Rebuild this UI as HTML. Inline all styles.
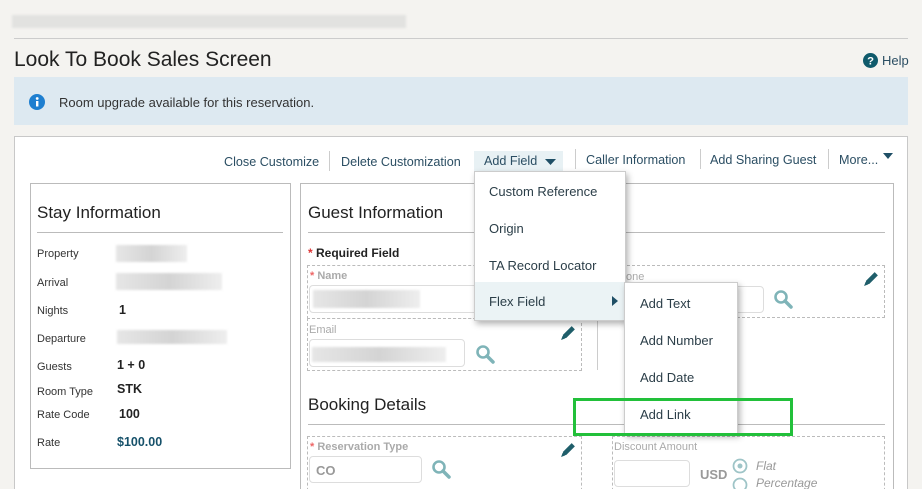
<!DOCTYPE html>
<html style="overflow:hidden;height:489px"><head><style>
*{margin:0;padding:0;box-sizing:border-box}
body{width:922px;height:489px;overflow:hidden;background:#f4f3f0;font-family:"Liberation Sans",sans-serif;color:#333;position:relative}
.a{position:absolute;white-space:nowrap}
.tb{font-size:12.6px;color:#2b4e63}
.sep{position:absolute;width:1px;height:20px;background:#ccc}
.lbl{font-size:11px;color:#333}
.val{font-size:12.5px;font-weight:bold;color:#222}
.dash{position:absolute;border:1px dashed #bbb}
.inp{position:absolute;border:1px solid #ddd;border-radius:4px;background:#fff}
.blur{position:absolute;background:linear-gradient(90deg,#e6e6e6,#d4d4d4,#eee);filter:blur(1px)}
.mi{position:absolute;font-size:13px;color:#2b3e48}
.ph{font-size:11px;color:#aaa}
</style></head><body>
<div class="blur" style="left:12px;top:15px;width:394px;height:13px;background:#e2e2e0"></div>
<div class="a" style="left:14px;top:38px;width:894px;height:1px;background:#ccc"></div>
<div class="a" style="left:14px;top:48px;font-size:21px;color:#222">Look To Book Sales Screen</div>
<svg class="a" style="left:863px;top:53px" width="15" height="15" viewBox="0 0 16 16"><circle cx="8" cy="8" r="8" fill="#0f5a6b"/><text x="8" y="12.5" font-size="12" font-weight="bold" fill="#fff" text-anchor="middle" font-family="Liberation Sans">?</text></svg>
<div class="a" style="left:882px;top:53px;font-size:13px;color:#2b4e63">Help</div>
<div class="a" style="left:14px;top:77px;width:894px;height:48px;background:#dde9f1"></div>
<svg class="a" style="left:29px;top:94px" width="16" height="16" viewBox="0 0 16 16"><circle cx="8" cy="8" r="8" fill="#1e7fd0"/><rect x="7" y="7" width="2.4" height="5.5" fill="#fff"/><circle cx="8.2" cy="4.5" r="1.4" fill="#fff"/></svg>
<div class="a" style="left:59px;top:95px;font-size:13px;color:#333">Room upgrade available for this reservation.</div>
<div class="a" style="left:14px;top:136px;width:894px;height:353px;background:#fff;border:1px solid #c8c8c8;border-bottom:none"></div>
<div class="a tb" style="left:224px;top:155px">Close Customize</div>
<div class="sep" style="left:329px;top:151px"></div>
<div class="a tb" style="left:341px;top:155px">Delete Customization</div>
<div class="a" style="left:474px;top:151px;width:89px;height:21px;background:#e8f1f4"></div>
<div class="a tb" style="left:484px;top:154px">Add Field</div>
<svg class="a" style="left:545px;top:159px" width="11" height="6"><path d="M0 0H11L5.5 6Z" fill="#1f4f66"/></svg>
<div class="sep" style="left:575px;top:149px"></div>
<div class="a tb" style="left:586px;top:153px">Caller Information</div>
<div class="sep" style="left:700px;top:149px"></div>
<div class="a tb" style="left:710px;top:153px">Add Sharing Guest</div>
<div class="sep" style="left:828px;top:149px"></div>
<div class="a tb" style="left:839px;top:153px">More...</div>
<svg class="a" style="left:883px;top:153px" width="10" height="6"><path d="M0 0H10L5 6Z" fill="#1f4f66"/></svg>

<div class="a" style="left:30px;top:183px;width:261px;height:286px;border:1px solid #bbb"></div>
<div class="a" style="left:37px;top:203px;font-size:17px;color:#222">Stay Information</div>
<div class="a" style="left:37px;top:232px;width:246px;height:1px;background:#bbb"></div>
<div class="a lbl" style="left:37px;top:248px">Property</div><div class="blur" style="left:116px;top:245px;width:71px;height:17px"></div>
<div class="a lbl" style="left:37px;top:277px">Arrival</div><div class="blur" style="left:116px;top:273px;width:106px;height:17px"></div>
<div class="a lbl" style="left:37px;top:305px">Nights</div><div class="a val" style="left:119px;top:303px">1</div>
<div class="a lbl" style="left:37px;top:333px">Departure</div><div class="blur" style="left:117px;top:330px;width:110px;height:14px"></div>
<div class="a lbl" style="left:37px;top:361px">Guests</div><div class="a val" style="left:117px;top:358px">1 + 0</div>
<div class="a lbl" style="left:37px;top:386px">Room Type</div><div class="a val" style="left:117px;top:382px">STK</div>
<div class="a lbl" style="left:37px;top:409px">Rate Code</div><div class="a val" style="left:119px;top:407px">100</div>
<div class="a lbl" style="left:37px;top:437px">Rate</div><div class="a val" style="left:117px;top:435px;color:#16516a">$100.00</div>

<div class="a" style="left:300px;top:183px;width:594px;height:306px;border:1px solid #bbb;border-bottom:none"></div>
<div class="a" style="left:308px;top:203px;font-size:17px;color:#222">Guest Information</div>
<div class="a" style="left:308px;top:232px;width:577px;height:1px;background:#bbb"></div>
<div class="a" style="left:308px;top:246px;font-size:12px;font-weight:bold;color:#222"><span style="color:#d33">*</span> Required Field</div>
<div class="dash" style="left:307px;top:265px;width:275px;height:54px"></div>
<div class="a ph" style="left:310px;top:270px;font-weight:bold"><span style="color:#e66">*</span> Name</div>
<div class="inp" style="left:309px;top:285px;width:170px;height:28px"></div><div class="blur" style="left:313px;top:290px;width:107px;height:18px"></div>
<div class="dash" style="left:307px;top:318px;width:275px;height:53px"></div>
<div class="a ph" style="left:309px;top:324px">Email</div>
<div class="inp" style="left:309px;top:339px;width:156px;height:28px"></div><div class="blur" style="left:312px;top:347px;width:134px;height:15px"></div>
<svg class="a" style="left:475px;top:344px" width="20" height="20" viewBox="0 0 20 20"><circle cx="8" cy="8" r="5.5" fill="none" stroke="#7fb4b8" stroke-width="2.6"/><path d="M12 12L18 18" stroke="#7fb4b8" stroke-width="3.5" stroke-linecap="round"/></svg>
<svg class="a" style="left:560px;top:324px" width="17" height="17" viewBox="0 0 16 16"><path d="M2 14L3 10L11 2L14 5L6 13Z" fill="#1f5e6a"/><path d="M1 15L2.5 11L5 13.5Z" fill="#1f5e6a"/></svg>
<div class="a" style="left:597px;top:320px;width:1px;height:50px;background:#ccc"></div>
<div class="dash" style="left:612px;top:265px;width:273px;height:53px"></div>
<div class="a ph" style="left:626px;top:271px">one</div>
<div class="inp" style="left:700px;top:286px;width:64px;height:27px"></div>
<svg class="a" style="left:773px;top:289px" width="20" height="20" viewBox="0 0 20 20"><circle cx="8" cy="8" r="5.5" fill="none" stroke="#7fb4b8" stroke-width="2.6"/><path d="M12 12L18 18" stroke="#7fb4b8" stroke-width="3.5" stroke-linecap="round"/></svg>
<svg class="a" style="left:863px;top:270px" width="17" height="17" viewBox="0 0 16 16"><path d="M2 14L3 10L11 2L14 5L6 13Z" fill="#1f5e6a"/><path d="M1 15L2.5 11L5 13.5Z" fill="#1f5e6a"/></svg>

<div class="a" style="left:308px;top:395px;font-size:17px;color:#222">Booking Details</div>
<div class="a" style="left:308px;top:424px;width:577px;height:1px;background:#bbb"></div>
<div class="dash" style="left:307px;top:436px;width:275px;height:60px"></div>
<div class="a ph" style="left:310px;top:441px;font-weight:bold"><span style="color:#e66">*</span> Reservation Type</div>
<div class="inp" style="left:309px;top:456px;width:113px;height:27px"></div>
<div class="a" style="left:316px;top:463px;font-size:13px;font-weight:bold;color:#999">CO</div>
<svg class="a" style="left:431px;top:458px" width="20" height="22" viewBox="0 0 20 20"><circle cx="8" cy="8" r="5.5" fill="none" stroke="#7fb4b8" stroke-width="2.6"/><path d="M12 12L18 18" stroke="#7fb4b8" stroke-width="3.5" stroke-linecap="round"/></svg>
<svg class="a" style="left:560px;top:441px" width="17" height="17" viewBox="0 0 16 16"><path d="M2 14L3 10L11 2L14 5L6 13Z" fill="#1f5e6a"/><path d="M1 15L2.5 11L5 13.5Z" fill="#1f5e6a"/></svg>
<div class="dash" style="left:612px;top:436px;width:273px;height:60px"></div>
<div class="a ph" style="left:614px;top:441px">Discount Amount</div>
<div class="inp" style="left:614px;top:460px;width:76px;height:27px"></div>
<div class="a" style="left:700px;top:467px;font-size:13px;font-weight:bold;color:#999">USD</div>
<svg class="a" style="left:732px;top:458px" width="16" height="31"><circle cx="8" cy="8" r="6.5" fill="none" stroke="#9ec4c7" stroke-width="1.8"/><circle cx="8" cy="8" r="2.5" fill="#9ec4c7"/><circle cx="8" cy="27" r="6.5" fill="none" stroke="#9ec4c7" stroke-width="1.8"/></svg>
<div class="a" style="left:756px;top:459px;font-size:12px;font-style:italic;color:#999">Flat</div>
<div class="a" style="left:756px;top:476px;font-size:12px;font-style:italic;color:#999">Percentage</div>

<div class="a" style="left:474px;top:171px;width:152px;height:150px;background:#fff;border:1px solid #ccc;box-shadow:2px 3px 6px rgba(0,0,0,.3)"></div>
<div class="a" style="left:475px;top:282px;width:150px;height:38px;background:#ebf3f5"></div>
<div class="mi" style="left:489px;top:184px">Custom Reference</div>
<div class="mi" style="left:489px;top:221px">Origin</div>
<div class="mi" style="left:489px;top:258px">TA Record Locator</div>
<div class="mi" style="left:489px;top:294px">Flex Field</div>
<svg class="a" style="left:612px;top:296px" width="6" height="10"><path d="M0 0L6 5L0 10Z" fill="#1f4f66"/></svg>
<div class="a" style="left:624px;top:282px;width:114px;height:152px;background:#fff;border:1px solid #ccc;box-shadow:2px 3px 6px rgba(0,0,0,.3)"></div>
<div class="mi" style="left:640px;top:296px">Add Text</div>
<div class="mi" style="left:640px;top:333px">Add Number</div>
<div class="mi" style="left:640px;top:370px">Add Date</div>
<div class="mi" style="left:640px;top:407px">Add Link</div>
<div class="a" style="left:573px;top:398px;width:220px;height:38px;border:3px solid #22c03a"></div>
</body></html>
